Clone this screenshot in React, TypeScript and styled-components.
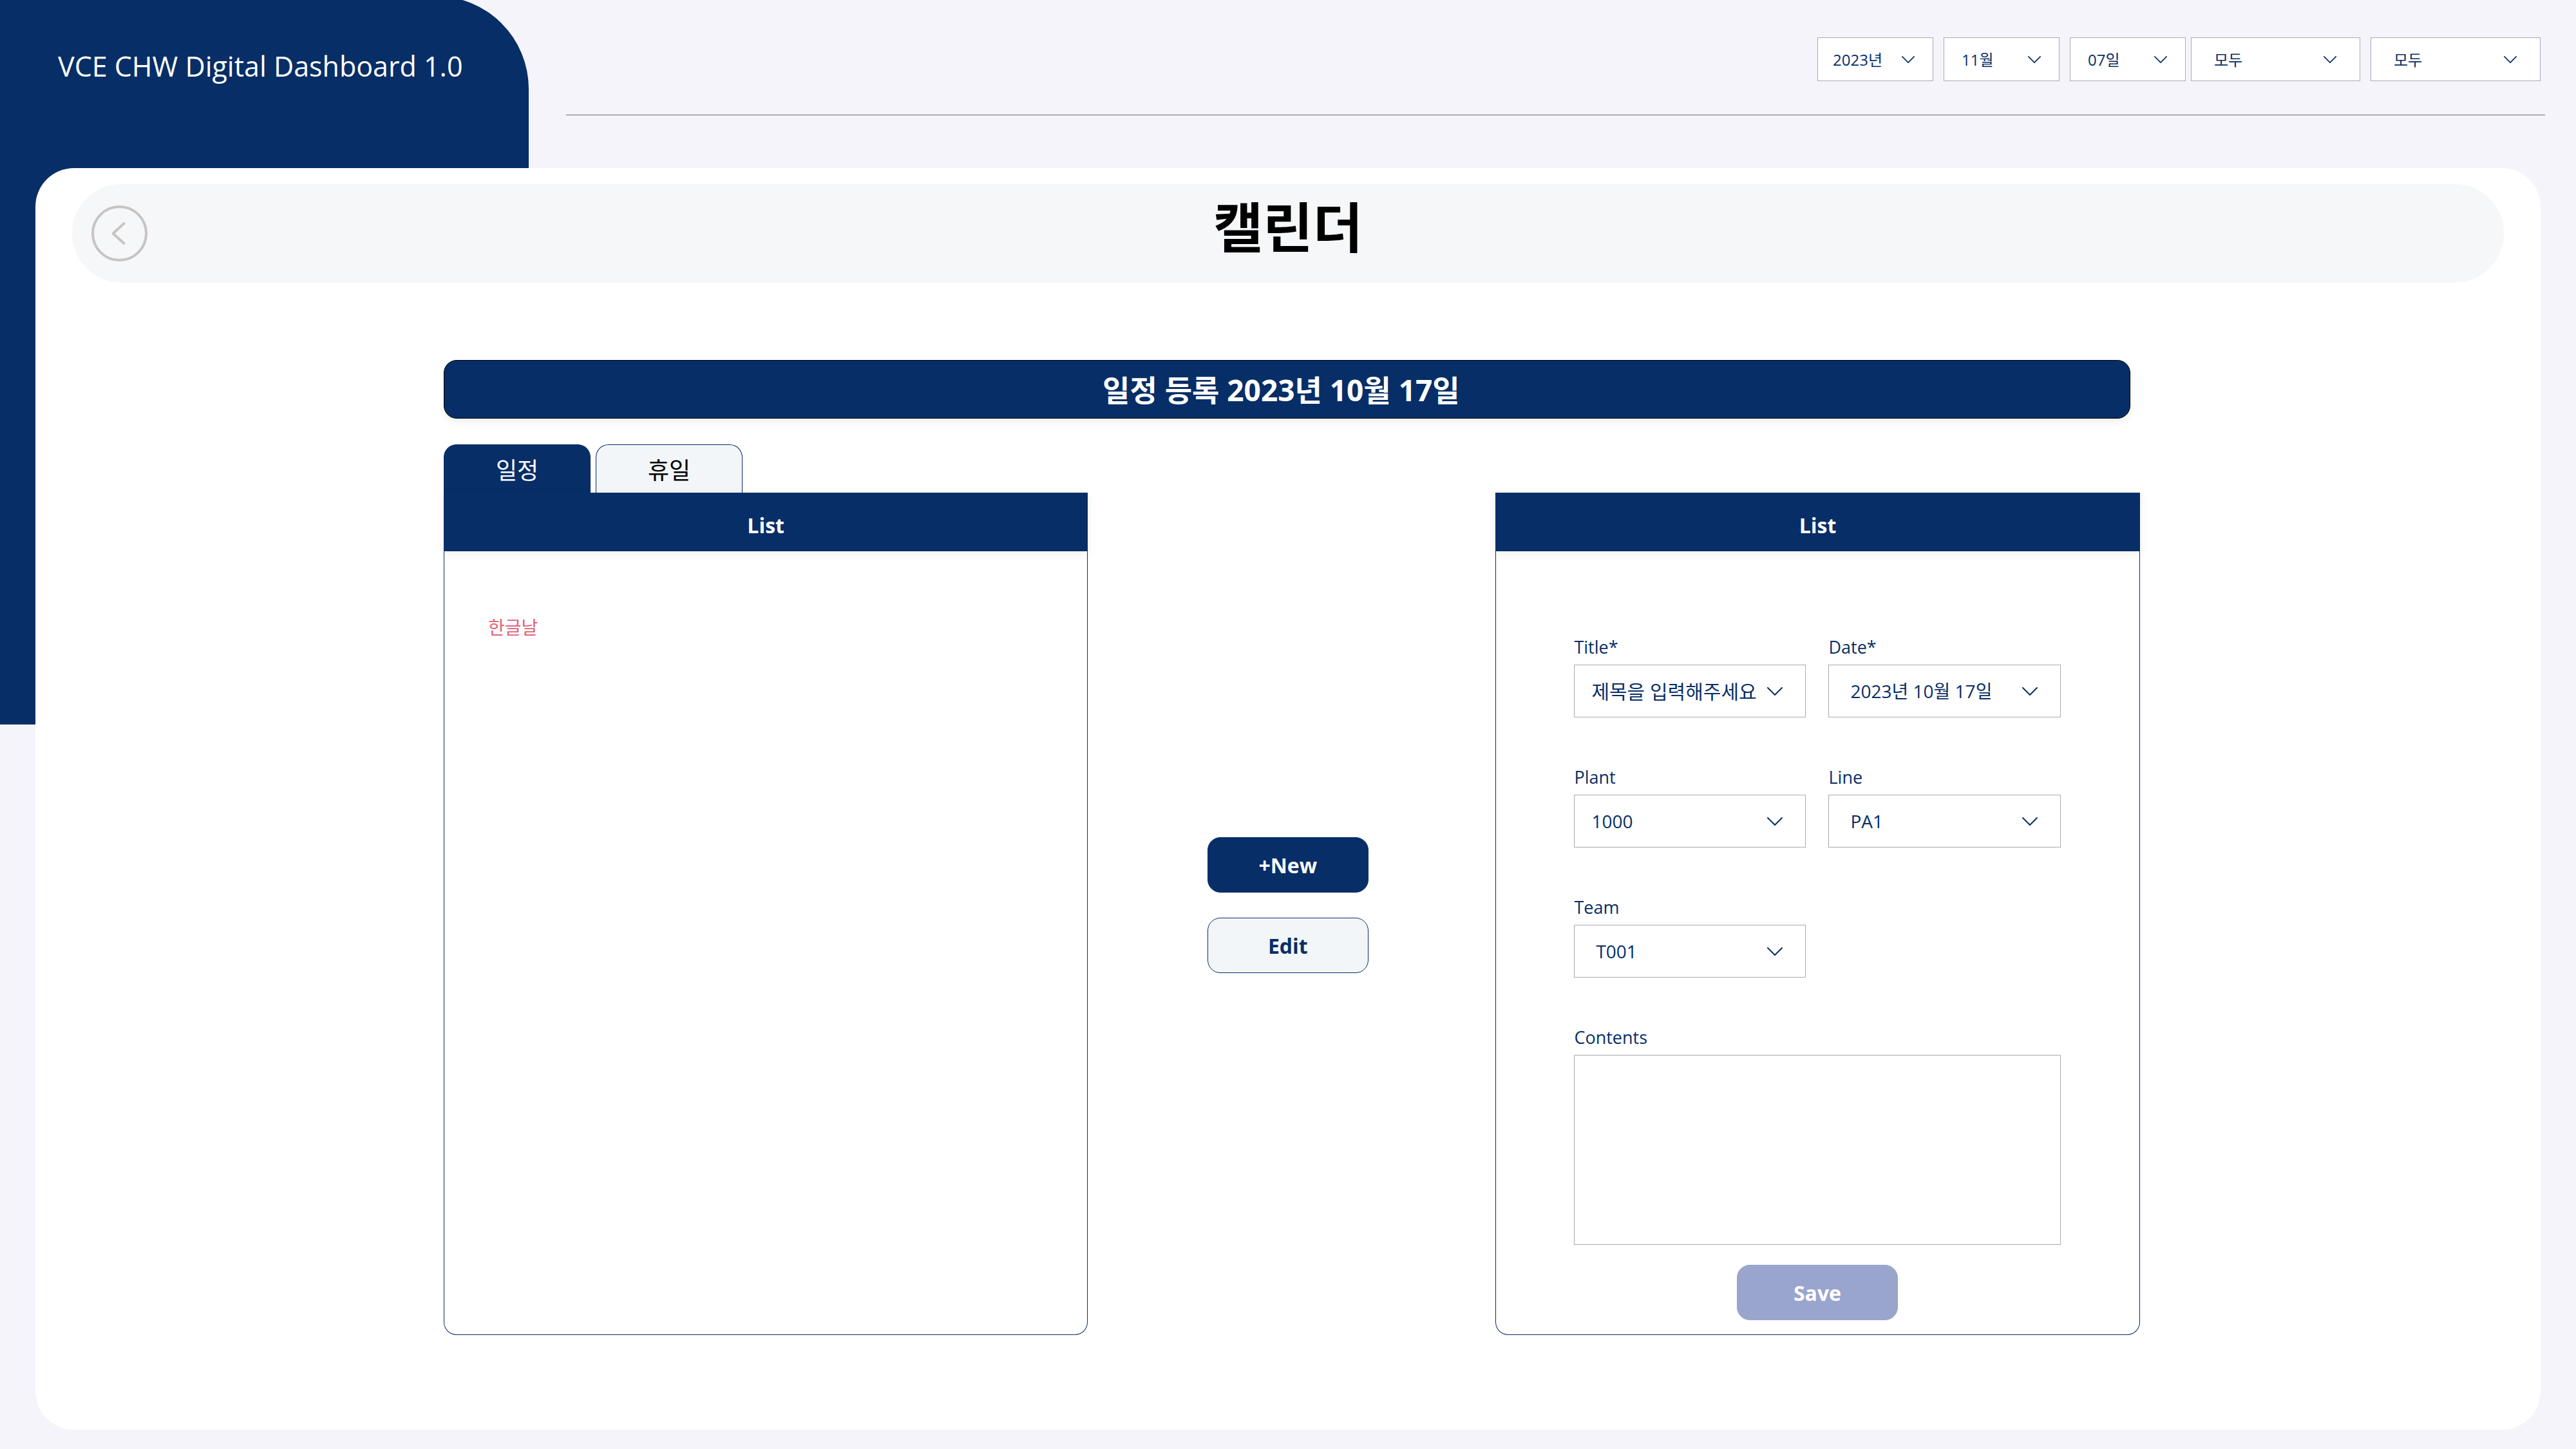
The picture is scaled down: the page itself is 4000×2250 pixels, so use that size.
import React from "react";
import styled, { createGlobalStyle } from "styled-components";

const navy = "#072e66";
const fieldBorder = "#a9aab4";
const fontStack = `"Open Sans", "Noto Sans CJK KR", sans-serif`;

const GlobalStyle = createGlobalStyle`
  *, *::before, *::after { box-sizing: border-box; }
  body { margin: 0; background: #f5f4fb; font-family: ${fontStack}; color: ${navy}; }
  button, select, textarea { font-family: inherit; }
`;

const Page = styled.div`
  min-height: 100vh;
  padding-bottom: 30px;
  background: linear-gradient(${navy}, ${navy}) 0 0 / 200px 50vh no-repeat;
`;

const Header = styled.header`
  display: flex;
  align-items: flex-start;
`;

const Brand = styled.div`
  flex: 0 0 821px;
  height: 267px;
  margin-top: -6px;
  padding: 79px 0 0 90px;
  border-top-right-radius: 144px;
  background: ${navy};
  color: #fff;
  font-size: 43px;
  line-height: 60px;
  white-space: nowrap;
`;

const Filters = styled.div`
  flex: 1;
  display: flex;
  justify-content: flex-end;
  gap: 16px;
  height: 179px;
  margin: 0 48px 0 58px;
  padding: 58px 7px 0 0;
  border-bottom: 1px solid #6f6f74;
`;

const FilterPair = styled.div`
  display: flex;
  gap: 8px;
`;

const SelectBox = styled.div<{ $width?: number; $height: number; $inset: number }>`
  display: grid;
  align-items: center;
  width: ${(p) => (p.$width ? `${p.$width}px` : "100%")};
  height: ${(p) => p.$height}px;

  > * { grid-area: 1 / 1; }
  > svg {
    justify-self: end;
    margin-right: ${(p) => p.$inset}px;
    pointer-events: none;
  }
`;

const SelectControl = styled.select<{ $size: number; $pad: number }>`
  appearance: none;
  width: 100%;
  height: 100%;
  margin: 0;
  padding: 0 0 0 ${(p) => p.$pad}px;
  border: 1px solid ${fieldBorder};
  border-radius: 0;
  background: #fff;
  color: ${navy};
  font-size: ${(p) => p.$size}px;
`;

const Card = styled.main`
  min-height: calc(100vh - 291px);
  margin: 0 55px;
  padding-top: 25px;
  border-radius: 60px;
  background: #fff;
`;

const TitleBar = styled.div`
  display: grid;
  grid-template-columns: 1fr auto 1fr;
  align-items: center;
  height: 153px;
  margin: 0 57px;
  padding: 0 30px;
  border-radius: 77px;
  background: #f5f7f9;
`;

const BackButton = styled.button`
  width: 87px;
  height: 87px;
  padding: 0;
  border: 0;
  background: none;

  svg { display: block; }
`;

const Title = styled.h1`
  margin: 0;
  padding-bottom: 20px;
  color: #000;
  font-size: 84px;
  line-height: 100px;
  font-weight: 700;
`;

const Content = styled.div`
  margin: 120px 16% 0 16.3%;
`;

const Banner = styled.h2`
  display: flex;
  align-items: center;
  justify-content: center;
  height: 91px;
  margin: 0 15px 40px 0;
  padding: 0 18px 4px 0;
  border: 1px solid #000;
  border-radius: 20px;
  background: ${navy};
  box-shadow: 0 6px 12px rgba(0, 0, 0, 0.06);
  color: #fff;
  font-size: 46px;
  font-weight: 700;
`;

const Workspace = styled.div`
  display: grid;
  grid-template-columns: 1000fr 633fr 1000fr;
`;

const Column = styled.section<{ $belowTabs?: boolean }>`
  display: flex;
  flex-direction: column;
  padding-top: ${(p) => (p.$belowTabs ? 75 : 0)}px;
`;

const Tabs = styled.div`
  display: flex;
  gap: 8px;
`;

const Tab = styled.button<{ $active?: boolean }>`
  width: 228px;
  height: 75px;
  padding: 6px 0 0;
  border: 1px solid ${navy};
  border-bottom: 0;
  border-radius: 20px 20px 0 0;
  background: ${(p) => (p.$active ? navy : "#f2f6f8")};
  color: ${(p) => (p.$active ? "#fff" : "#000")};
  font-size: 36px;
  line-height: 48px;
`;

const PanelHeader = styled.h3`
  display: flex;
  align-items: center;
  justify-content: center;
  height: 91px;
  margin: 0;
  padding-top: 10px;
  background: ${navy};
  box-shadow: 0 4px 14px rgba(0, 0, 0, 0.07);
  color: #fff;
  font-size: 32px;
  font-weight: 700;
`;

const panelBody = `
  border: 1px solid ${navy};
  border-top: 0;
  border-radius: 0 0 20px 20px;
`;

const EventList = styled.ul`
  ${panelBody}
  flex: 1;
  margin: 0;
  padding: 99px 68px;
  list-style: none;
`;

const Holiday = styled.li`
  color: #e06277;
  font-size: 28px;
  line-height: 38px;
`;

const Form = styled.form`
  ${panelBody}
  display: grid;
  grid-template-columns: 1fr 1fr;
  column-gap: 35px;
  row-gap: 74px;
  padding: 130px 122px 22px 121px;
`;

const Field = styled.div<{ $wide?: boolean }>`
  display: flex;
  flex-direction: column;
  gap: 8px;
  grid-column: ${(p) => (p.$wide ? "1 / -1" : "auto")};
`;

const Label = styled.label`
  font-size: 27px;
  line-height: 38px;
`;

const Contents = styled.textarea`
  display: block;
  width: 100%;
  height: 295px;
  padding: 20px 27px;
  border: 1px solid ${fieldBorder};
  background: #fff;
  color: ${navy};
  font-size: 28px;
  resize: none;
`;

const Actions = styled.div`
  display: flex;
  flex-direction: column;
  align-items: center;
  justify-content: center;
  gap: 39px;
  padding: 48px 12px 0 0;
`;

const Button = styled.button<{ $tone: "solid" | "light" | "muted" }>`
  width: 250px;
  height: 86px;
  padding: 0;
  border: 1px solid ${(p) => (p.$tone === "muted" ? "#9aa5cd" : navy)};
  border-radius: 20px;
  background: ${(p) => ({ solid: navy, light: "#f2f6f8", muted: "#9aa5cd" })[p.$tone]};
  color: ${(p) => (p.$tone === "light" ? navy : "#fff")};
  font-size: 32px;
  font-weight: 700;
`;

const FormFooter = styled.div`
  display: flex;
  flex-direction: column;
  align-items: center;
  gap: 31px;
  grid-column: 1 / -1;

  > ${Field} { width: 100%; }
`;

function Chevron({ width, height }: { width: number; height: number }) {
  return (
    <svg width={width} height={height} viewBox="0 0 24 13" fill="none" aria-hidden="true">
      <path d="M1 1L12 12L23 1" stroke={navy} strokeWidth="2" strokeLinecap="round" strokeLinejoin="round" />
    </svg>
  );
}

type FilterProps = { name: string; value: string; width: number; pad: number; inset: number };

function Filter({ name, value, width, pad, inset }: FilterProps) {
  return (
    <SelectBox $width={width} $height={68} $inset={inset}>
      <SelectControl $size={24} $pad={pad} aria-label={name}>
        <option>{value}</option>
      </SelectControl>
      <Chevron width={20} height={11} />
    </SelectBox>
  );
}

type SelectFieldProps = { id: string; label: string; value: string; pad: number; size?: number; wide?: boolean };

function SelectField({ id, label, value, pad, size = 28, wide }: SelectFieldProps) {
  return (
    <Field $wide={wide}>
      <Label htmlFor={id}>{label}</Label>
      <SelectBox $width={wide ? 360 : undefined} $height={82} $inset={36}>
        <SelectControl id={id} $size={size} $pad={pad}>
          <option>{value}</option>
        </SelectControl>
        <Chevron width={24} height={13} />
      </SelectBox>
    </Field>
  );
}

export default function App() {
  return (
    <Page>
      <GlobalStyle />
      <Header>
        <Brand>VCE CHW Digital Dashboard 1.0</Brand>
        <Filters>
          <Filter name="Year" value="2023년" width={180} pad={23} inset={29} />
          <Filter name="Month" value="11월" width={180} pad={27} inset={29} />
          <FilterPair>
            <Filter name="Day" value="07일" width={180} pad={27} inset={29} />
            <Filter name="Plant" value="모두" width={263} pad={35} inset={37} />
          </FilterPair>
          <Filter name="Line" value="모두" width={264} pad={35} inset={37} />
        </Filters>
      </Header>

      <Card>
        <TitleBar>
          <BackButton type="button" aria-label="Back">
            <svg width="87" height="87" viewBox="0 0 87 87" fill="none" stroke="#c8c4c4">
              <circle cx="43.5" cy="43.5" r="41.5" strokeWidth="4" />
              <path d="M50.5 28L33.5 43.5L50.5 59" strokeWidth="4" strokeLinecap="round" strokeLinejoin="round" />
            </svg>
          </BackButton>
          <Title>캘린더</Title>
        </TitleBar>

        <Content>
          <Banner>일정 등록 2023년 10월 17일</Banner>
          <Workspace>
            <Column>
              <Tabs role="tablist">
                <Tab type="button" role="tab" aria-selected="true" $active>일정</Tab>
                <Tab type="button" role="tab" aria-selected="false">휴일</Tab>
              </Tabs>
              <PanelHeader>List</PanelHeader>
              <EventList>
                <Holiday>한글날</Holiday>
              </EventList>
            </Column>

            <Actions>
              <Button type="button" $tone="solid">+New</Button>
              <Button type="button" $tone="light">Edit</Button>
            </Actions>

            <Column $belowTabs>
              <PanelHeader>List</PanelHeader>
              <Form>
                <SelectField id="title" label="Title*" value="제목을 입력해주세요" pad={26} size={30} />
                <SelectField id="date" label="Date*" value="2023년 10월 17일" pad={33} />
                <SelectField id="plant" label="Plant" value="1000" pad={26} />
                <SelectField id="line" label="Line" value="PA1" pad={33} />
                <SelectField id="team" label="Team" value="T001" pad={33} wide />
                <FormFooter>
                  <Field>
                    <Label htmlFor="contents">Contents</Label>
                    <Contents id="contents" />
                  </Field>
                  <Button type="submit" $tone="muted">Save</Button>
                </FormFooter>
              </Form>
            </Column>
          </Workspace>
        </Content>
      </Card>
    </Page>
  );
}
